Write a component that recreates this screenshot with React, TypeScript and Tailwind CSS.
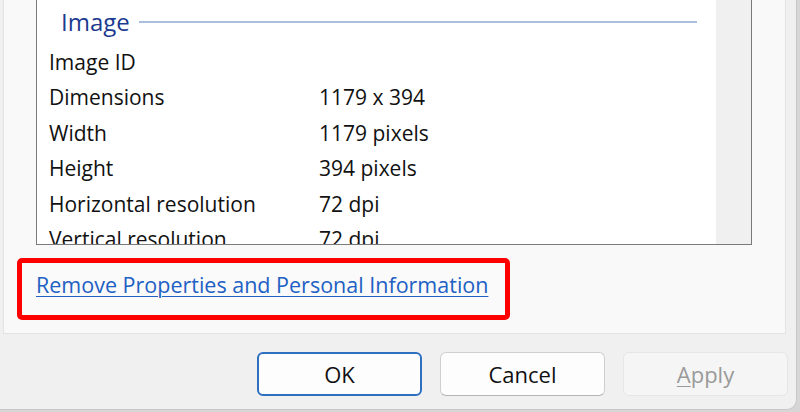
import React from "react";

const rows = [
  { label: "Image ID", value: "" },
  { label: "Dimensions", value: "1179 x 394" },
  { label: "Width", value: "1179 pixels" },
  { label: "Height", value: "394 pixels" },
  { label: "Horizontal resolution", value: "72 dpi" },
  { label: "Vertical resolution", value: "72 dpi" },
];

function DialogButton({
  label,
  variant,
}: {
  label: React.ReactNode;
  variant: "primary" | "normal" | "disabled";
}) {
  const styles = {
    primary: "border-2 border-[#2f6fbf] bg-[#fdfdfd] text-[#111]",
    normal: "border border-[#cfcfcf] border-b-[#b5b5b5] bg-[#fdfdfd] text-[#111]",
    disabled: "border border-[#e6e6e6] bg-[#f5f5f5] text-[#9a9a9a]",
  }[variant];
  return (
    <button
      className={`h-[44px] w-[165px] rounded-[6px] text-[22px] flex items-center justify-center ${styles}`}
    >
      {label}
    </button>
  );
}

export default function App() {
  return (
    <div
      className="w-[800px] h-[412px] overflow-hidden bg-[#d6d6d6]"
      style={{ fontFamily: '"Open Sans", "Noto Sans", sans-serif' }}
    >
      <div className="w-[797px] h-[410px] bg-[#f0f0f0] rounded-br-[10px] border-r border-b border-[#c8c8c8]">
        {/* tab page */}
        <div className="ml-[3px] w-[783px] h-[334px] bg-[#f9f9f9] border-l border-r border-b border-[#e3e3e3] flex flex-col">
          {/* property list */}
          <div className="ml-[32px] w-[716px] h-[245px] bg-white border-l border-r border-b border-[#7a7a7a] flex overflow-hidden">
            <div className="flex-1 flex flex-col overflow-hidden">
              <div className="h-[43px] shrink-0 flex items-center pl-[24px] pr-[19px] gap-[9px]">
                <span className="text-[24px] text-[#1c3a8f] leading-none">Image</span>
                <div className="flex-1 h-[2px] bg-[#a9bfdc]" />
              </div>
              <div className="pt-[2px] flex flex-col">
                {rows.map((r) => (
                  <div
                    key={r.label}
                    className="h-[35.4px] shrink-0 flex items-center pl-[12px] text-[21px] text-[#111]"
                  >
                    <span className="w-[270px] whitespace-nowrap">{r.label}</span>
                    <span className="whitespace-nowrap">{r.value}</span>
                  </div>
                ))}
              </div>
            </div>
            <div className="w-[35px] bg-[#f0f0f0]" />
          </div>
          {/* remove properties link */}
          <div className="mt-[13px] ml-[13px] w-[493px] h-[62px] border-[5px] border-[#ff0000] rounded-[5px] bg-[#fafafa] flex items-center pl-[14px] pb-[8px]">
            <a
              href="#"
              className="text-[21.5px] leading-none text-[#2160c4] underline decoration-1 underline-offset-[3px] whitespace-nowrap"
            >
              Remove Properties and Personal Information
            </a>
          </div>
        </div>
        {/* buttons */}
        <div className="mt-[18px] flex gap-[18px] pl-[257px]">
          <DialogButton label="OK" variant="primary" />
          <DialogButton label="Cancel" variant="normal" />
          <DialogButton
            label={
              <span>
                <span className="underline decoration-1 underline-offset-[3px]">A</span>pply
              </span>
            }
            variant="disabled"
          />
        </div>
      </div>
    </div>
  );
}
